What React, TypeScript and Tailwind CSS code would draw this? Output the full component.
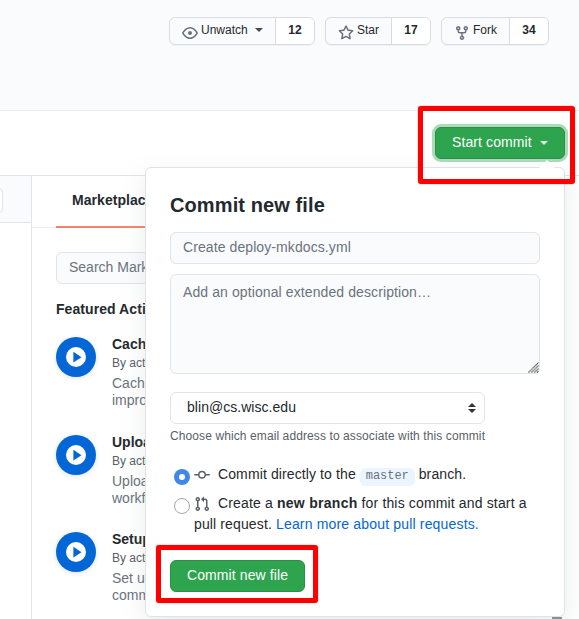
import type { ReactNode } from 'react';

const EYE =
  'M1.679 7.932c.412-.621 1.242-1.75 2.366-2.717C5.175 4.242 6.527 3.5 8 3.5c1.473 0 2.824.742 3.955 1.715 1.124.967 1.954 2.096 2.366 2.717a.119.119 0 010 .136c-.412.621-1.242 1.75-2.366 2.717C10.825 11.758 9.473 12.5 8 12.5c-1.473 0-2.824-.742-3.955-1.715C2.92 9.818 2.09 8.69 1.679 8.068a.119.119 0 010-.136zM8 2c-1.981 0-3.67.992-4.933 2.078C1.797 5.169.88 6.423.43 7.1a1.619 1.619 0 000 1.798c.45.678 1.367 1.932 2.637 3.024C4.329 13.008 6.019 14 8 14c1.981 0 3.67-.992 4.933-2.078 1.27-1.091 2.187-2.345 2.637-3.023a1.619 1.619 0 000-1.798c-.45-.678-1.367-1.932-2.637-3.023C11.671 2.992 9.981 2 8 2zm0 8a2 2 0 100-4 2 2 0 000 4z';
const STAR =
  'M8 .25a.75.75 0 01.673.418l1.882 3.815 4.21.612a.75.75 0 01.416 1.279l-3.046 2.97.719 4.192a.75.75 0 01-1.088.791L8 12.347l-3.766 1.98a.75.75 0 01-1.088-.79l.72-4.194L.818 6.374a.75.75 0 01.416-1.28l4.21-.611L7.327.668A.75.75 0 018 .25zm0 2.445L6.615 5.5a.75.75 0 01-.564.41l-3.097.45 2.24 2.184a.75.75 0 01.216.664l-.528 3.084 2.769-1.456a.75.75 0 01.698 0l2.77 1.456-.53-3.084a.75.75 0 01.216-.664l2.24-2.183-3.096-.45a.75.75 0 01-.564-.41L8 2.694z';
const FORK =
  'M5 3.25a.75.75 0 11-1.5 0 .75.75 0 011.5 0zm0 2.122a2.25 2.25 0 10-1.5 0v.878A2.25 2.25 0 005.75 8.5h1.5v2.128a2.251 2.251 0 101.5 0V8.5h1.5a2.25 2.25 0 002.25-2.25v-.878a2.25 2.25 0 10-1.5 0v.878a.75.75 0 01-.75.75h-4.5A.75.75 0 015 6.25v-.878zm3.75 7.378a.75.75 0 11-1.5 0 .75.75 0 011.5 0zm3-8.75a.75.75 0 100-1.5.75.75 0 000 1.5z';
const COMMIT =
  'M10.5 7.75a2.5 2.5 0 11-5 0 2.5 2.5 0 015 0zm1.43.75a4.002 4.002 0 01-7.86 0H.75a.75.75 0 110-1.5h3.32a4.001 4.001 0 017.86 0h3.32a.75.75 0 110 1.5h-3.32z';
const PULL =
  'M7.177 3.073L9.573.677A.25.25 0 0110 .854v4.792a.25.25 0 01-.427.177L7.177 3.427a.25.25 0 010-.354zM3.75 2.5a.75.75 0 100 1.5.75.75 0 000-1.5zm-2.25.75a2.25 2.25 0 113 2.122v5.256a2.251 2.251 0 11-1.5 0V5.372A2.25 2.25 0 011.5 3.25zM11 2.5h-1V4h1a1 1 0 011 1v5.628a2.251 2.251 0 101.5 0V5A2.5 2.5 0 0011 2.5zm1 10.25a.75.75 0 111.5 0 .75.75 0 01-1.5 0zM3.75 12a.75.75 0 100 1.5.75.75 0 000-1.5z';

function Icon({ d, className }: { d: string; className: string }) {
  return (
    <svg viewBox="0 0 16 16" className={`size-4 shrink-0 fill-current ${className}`}>
      <path fillRule="evenodd" d={d} />
    </svg>
  );
}

function Social({
  icon,
  label,
  count,
  width,
  caret = false,
}: {
  icon: ReactNode;
  label: string;
  count: number;
  width: string;
  caret?: boolean;
}) {
  return (
    <div
      className={`flex h-7 overflow-hidden rounded-md border border-[#d9dbde] bg-[#fafbfc] text-xs text-[#24292e] shadow-[0_1px_0_rgba(27,31,35,0.04)] ${width}`}
    >
      <div className="flex flex-1 pl-3 leading-[25px]">
        {icon}
        <span className="ml-[3px]">{label}</span>
        {caret && (
          <span className="mt-[10px] ml-[7px] size-0 border-x-4 border-t-4 border-x-transparent border-t-[#444a50]" />
        )}
      </div>
      <div className="w-[39px] border-l border-[#d9dbde] bg-white text-center leading-[25px] font-bold">
        {count}
      </div>
    </div>
  );
}

const actions = [
  { name: 'Cach', lines: ['Cach', 'impro'], gap: 'h-[98px]' },
  { name: 'Uploa', lines: ['Uploa', 'workf'], gap: 'h-[97px]' },
  { name: 'Setup', lines: ['Set u', 'comm'], gap: 'h-[87px]' },
];

function Marketplace() {
  return (
    <aside className="w-[400px] shrink-0 border-l border-[#e1e4e8]">
      <div className="flex h-[52px] border-b border-[#eaecef] pl-6">
        <div className="-mb-px h-[52px] w-[130px] border-b-2 border-[#f9826c] pl-4 text-sm leading-[49px] font-bold tracking-[0.05px]">
          Marketplac
        </div>
      </div>
      <div className="pt-6 pl-6">
        <div className="h-8 w-80 rounded-md border border-[#e1e4e8] bg-[#fafbfc] pl-3 text-sm leading-[29px] text-[#6a737d]">
          Search Mark
        </div>
        <h4 className="mt-[14px] text-sm leading-[22px] font-bold tracking-[0.07px]">
          Featured Acti
        </h4>
        <div className="pt-[17px]">
          {actions.map((a) => (
            <div key={a.name} className={`flex whitespace-nowrap ${a.gap}`}>
              <div className="flex size-10 shrink-0 items-center justify-center rounded-full bg-[#0366d6] shadow-[0_1px_5px_rgba(27,31,35,0.15)]">
                <svg viewBox="0 0 20 20" className="size-5">
                  <circle cx="10" cy="10" r="10" fill="#fff" />
                  <path d="M7.4 4.8v10.8l8.1-5.4z" fill="#0366d6" />
                </svg>
              </div>
              <div className="ml-4">
                <div className="-mt-px text-sm leading-4 font-bold">{a.name}</div>
                <div className="mt-[3px] text-xs leading-4 text-[#586069]">By act</div>
                <div className="mt-[4px] text-sm leading-[17px] text-[#6a737d]">
                  {a.lines[0]}
                  <br />
                  {a.lines[1]}
                </div>
              </div>
            </div>
          ))}
        </div>
      </div>
    </aside>
  );
}

function CommitDialog() {
  return (
    <div className="absolute top-[167px] left-[145px] h-[450px] w-[420px] rounded-md border border-[#dfe2e7] bg-white px-6 pt-6 shadow-[0_8px_24px_rgba(149,157,165,0.2)]">
      <svg viewBox="0 0 16 8" className="absolute -top-2 left-[393px] h-2 w-4">
        <path d="M0 8 8 0l8 8z" fill="#fff" />
      </svg>
      <h2 className="text-xl leading-[26px] font-bold tracking-[0.1px]">Commit new file</h2>
      <div className="mt-[14px] h-8 w-[370px] rounded-md border border-[#e1e4e8] bg-[#fafbfc] pl-3 text-sm leading-[29px] tracking-[0.09px] text-[#6a737d]">
        Create deploy-mkdocs.yml
      </div>
      <div className="relative mt-[10px] h-[100px] w-[370px] rounded-md border border-[#e1e4e8] bg-[#fafbfc] pt-[7px] pl-3 text-sm leading-[21px] tracking-[0.1px] text-[#6a737d]">
        Add an optional extended description…
        <svg
          viewBox="0 0 11 11"
          className="absolute right-0 bottom-0 size-[11px]"
          stroke="#444"
          strokeWidth="1.1"
          strokeDasharray="1.1 0.4"
        >
          <path d="M.5 10.5l10-10M3.5 10.5l7-7M6.5 10.5l4-4M9 10.5l1.5-1.5" />
        </svg>
      </div>
      <div className="mt-[18px] flex h-8 w-[315px] justify-between rounded-md border border-[#e1e4e8] pr-2 pl-4 text-sm leading-[29px]">
        <span className="tracking-[0.04px]">blin@cs.wisc.edu</span>
        <svg viewBox="0 0 8 10" className="mt-[10px] h-[10px] w-2" fill="#333">
          <path d="M4 0l4 4H0zM4 10L0 6h8z" />
        </svg>
      </div>
      <p className="mt-[3px] text-xs leading-[18px] tracking-[0.1px] whitespace-nowrap text-[#586069]">
        Choose which email address to associate with this commit
      </p>
      <div className="mt-[19px] flex h-[29px] pl-1">
        <span className="mt-[5px] flex size-4 items-center justify-center rounded-full bg-[#3f88e8]">
          <span className="size-1.5 rounded-full bg-white" />
        </span>
        <Icon d={COMMIT} className="mt-[3px] ml-1 text-[#586069]" />
        <span className="ml-2 text-sm leading-[21px] tracking-[0.11px] whitespace-nowrap">
          Commit directly to the{' '}
          <code className="relative -top-px inline-block h-[18px] rounded-md bg-[#eaf5ff] px-1.5 align-[-1px] font-['Liberation_Mono',monospace] text-xs leading-[17px] tracking-[-0.05px] text-[#6a737d]">
            master
          </code>{' '}
          branch.
        </span>
      </div>
      <div className="flex h-[57px] pl-1">
        <span className="mt-[5px] size-4 rounded-full border border-[#aaa6a1]" />
        <div className="ml-1 text-sm leading-[21px] whitespace-nowrap">
          <div className="flex">
            <Icon d={PULL} className="mt-[3px] text-[#586069]" />
            <span className="ml-2 tracking-[0.15px]">
              Create a <b className="font-bold tracking-[0.28px]">new branch</b> for this commit and
              start a
            </span>
          </div>
          <span className="tracking-[0.13px]">pull request. </span>
          <span className="tracking-[0.17px] text-[#0366d6]">Learn more about pull requests.</span>
        </div>
      </div>
      <div className="mt-[10px] h-8 w-[135px] rounded-md border border-[#2a8f47] bg-[#2ea44f] text-center text-sm leading-[29px] tracking-[0.1px] text-white">
        Commit new file
      </div>
    </div>
  );
}

export default function App() {
  return (
    <div className="relative h-[619px] w-[579px] overflow-hidden bg-white font-['Liberation_Sans',Arial,sans-serif] text-[#24292e]">
      <header className="flex h-[111px] gap-[10px] border-b border-[#eaecef] bg-[#fafbfc] pt-[17px] pl-[169px]">
        <Social
          width="w-[146px]"
          label="Unwatch"
          count={12}
          caret
          icon={<Icon d={EYE} className="mt-[7px] text-[#6a737d]" />}
        />
        <Social
          width="w-[106px]"
          label="Star"
          count={17}
          icon={<Icon d={STAR} className="mt-[7px] text-[#6a737d]" />}
        />
        <Social
          width="w-[108px]"
          label="Fork"
          count={34}
          icon={<Icon d={FORK} className="mt-[7px] text-[#6a737d]" />}
        />
      </header>
      <div className="flex h-[65px] justify-end border-b border-[#e1e4e8] pt-4 pr-[14px]">
        <button className="flex h-8 w-[130px] rounded-md border border-[#2a8f47] bg-[#2ea44f] pl-4 text-sm leading-[29px] tracking-[0.1px] text-white shadow-[0_0_0_3px_rgba(46,164,79,0.4)]">
          Start commit
          <span className="mt-[13px] ml-2 size-0 border-x-4 border-t-4 border-x-transparent border-t-[#d5eddb]" />
        </button>
      </div>
      <div className="flex h-[443px]">
        <div className="w-[31px] shrink-0 overflow-hidden">
          <div className="h-[47px] border-b border-[#e1e4e8] bg-[#fafbfc] pt-[11px]">
            <div className="-ml-2 h-[27px] w-[11px] rounded-r-md border border-[#e1e4e8] bg-white" />
          </div>
        </div>
        <Marketplace />
      </div>
      <CommitDialog />
      <div className="absolute top-[617px] left-[552px] h-0.5 w-[10px] bg-[#8c8f92]" />
      <div className="absolute top-[106px] left-[418px] h-[78px] w-[157px] rounded-[3px] border-5 border-[#ff0000] shadow-[0_0_1px_#ff0000]" />
      <div className="absolute top-[545px] left-[156px] h-[58px] w-[162px] rounded-[3px] border-5 border-[#ff0000] shadow-[0_0_1px_#ff0000]" />
    </div>
  );
}
